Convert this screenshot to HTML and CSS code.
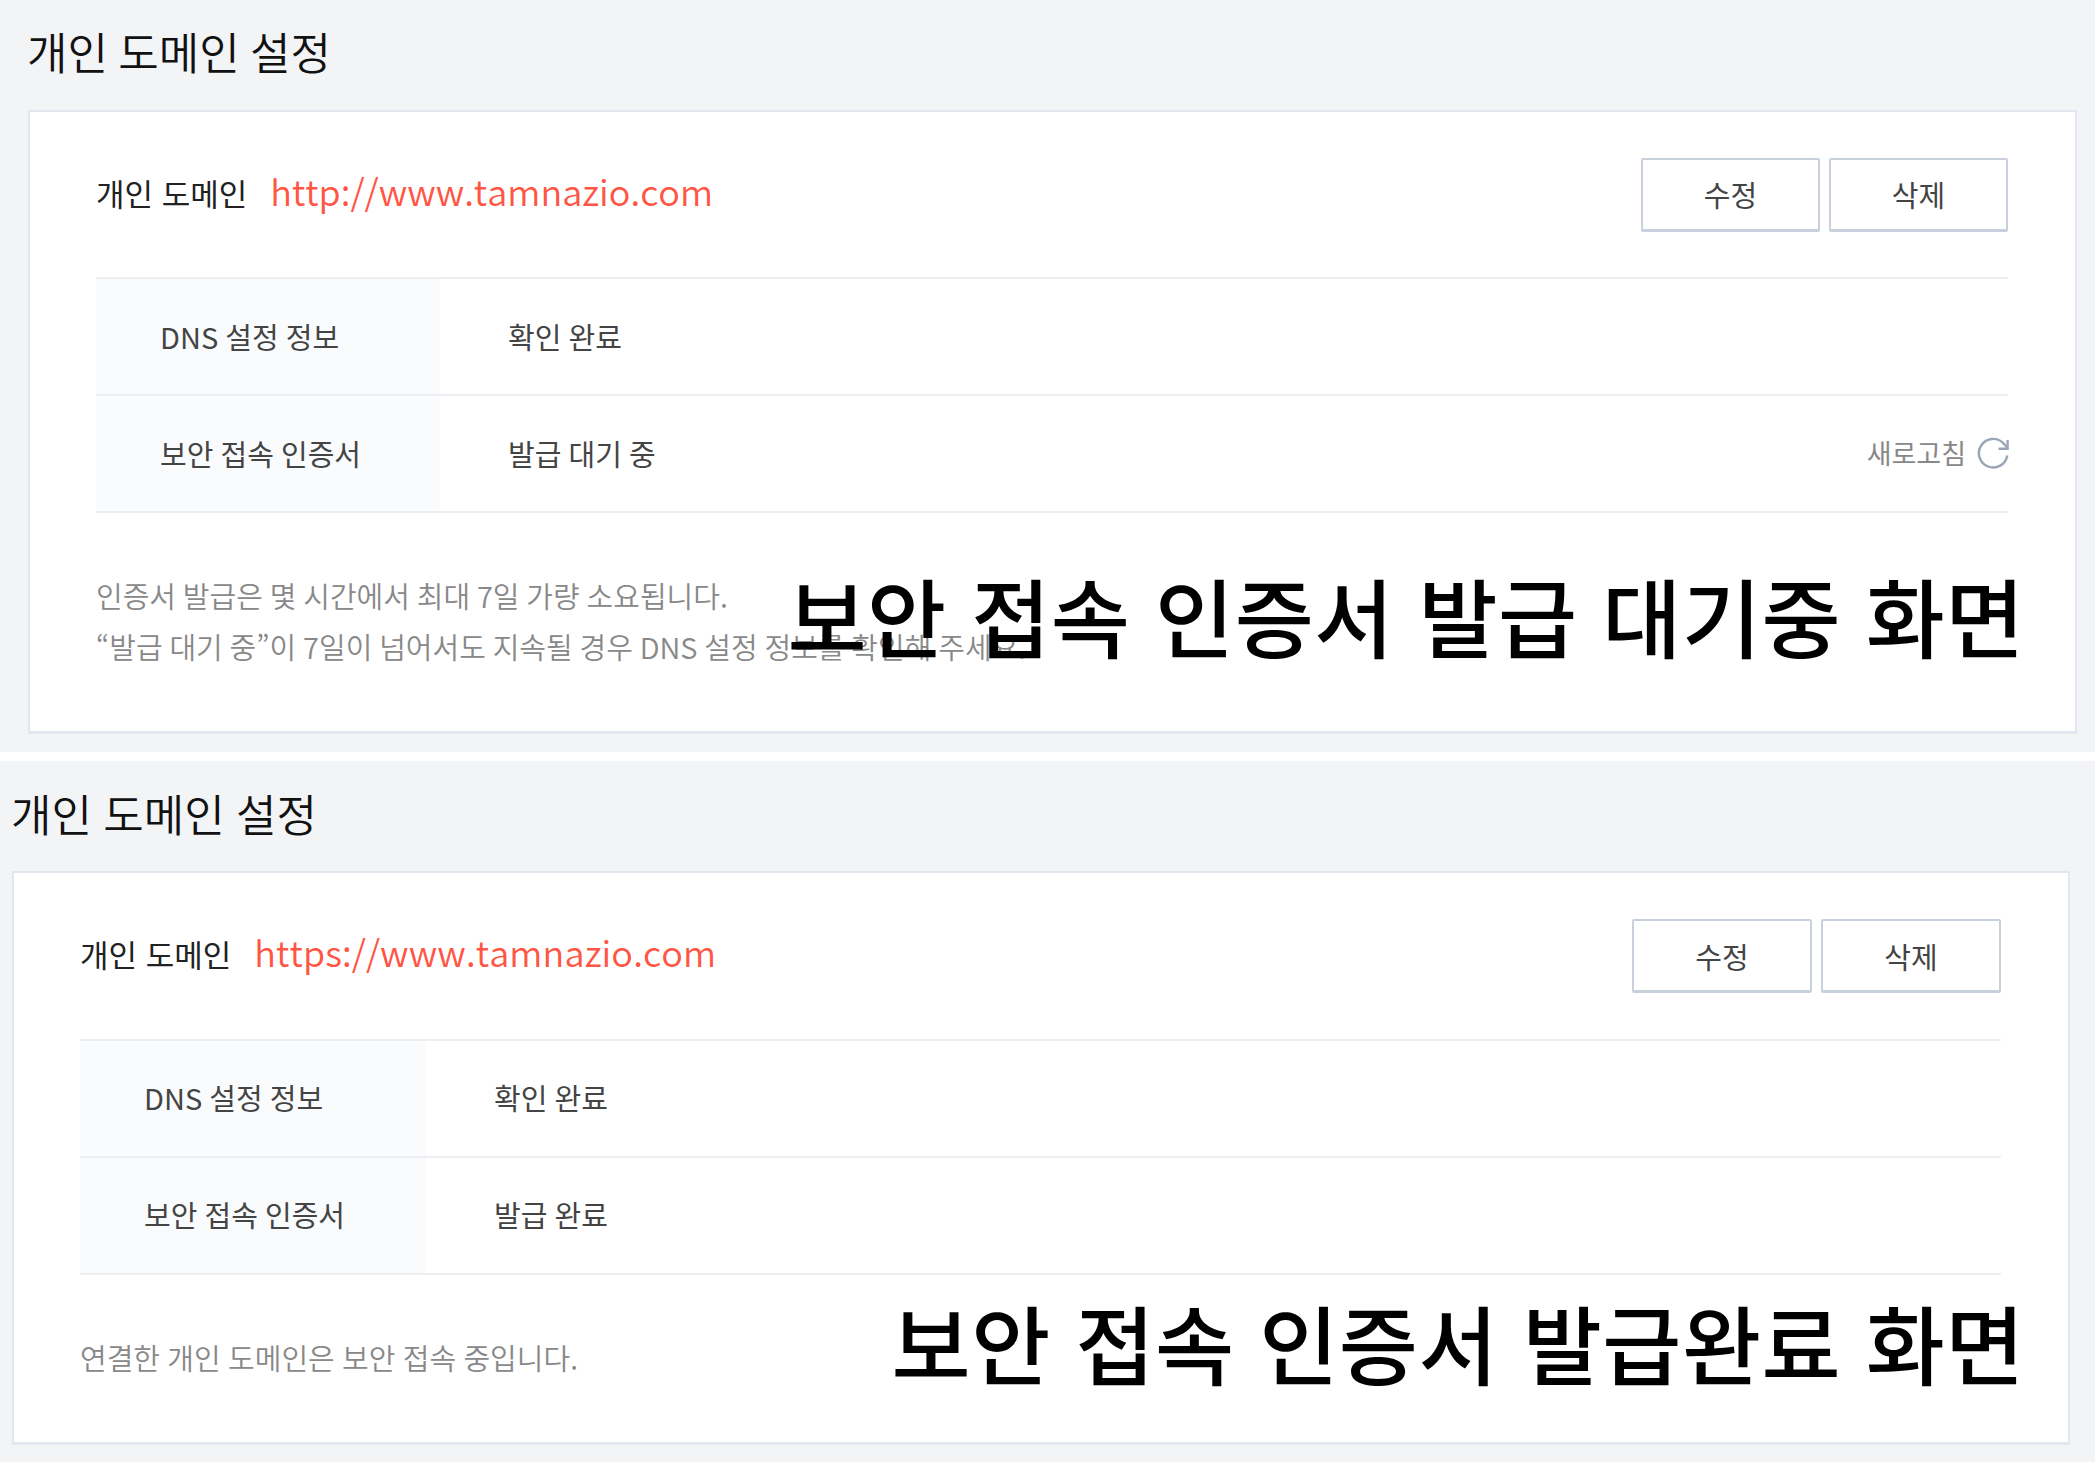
FILE: index.html
```
<!DOCTYPE html>
<html lang="ko">
<head>
	<meta charset="UTF-8">
	<title>개인 도메인 설정</title>
	<link rel="stylesheet" href="styles.css">
</head>
<body>
	<!-- 발급 대기 중 -->
	<div class="panel panel_wait">
		<h2 class="tit_domain">개인 도메인 설정</h2>
		<div class="box_domain">
			<div class="head_domain">
				<strong class="tit_sub">개인 도메인</strong>
				<a class="link_domain" lang="en">http://www.tamnazio.com</a>
				<div class="btn_area">
					<button type="button" class="btn">수정</button>
					<button type="button" class="btn">삭제</button>
				</div>
			</div>
			<dl class="list_info">
				<div class="row">
					<dt>DNS 설정 정보</dt>
					<dd>확인 완료</dd>
				</div>
				<div class="row">
					<dt>보안 접속 인증서</dt>
					<dd>발급 대기 중</dd>
					<dd class="refresh">
						<span>새로고침</span>
						<svg class="ico_refresh" viewBox="0 0 32 32">
							<path d="M30.3 18.5A14.3 14.3 0 1 1 26.5 6.3L30 10.5"/>
							<path d="M30.6 3V11.8H21.5"/>
						</svg>
					</dd>
				</div>
			</dl>
			<div class="desc">
				<p>인증서 발급은 몇 시간에서 최대 7일 가량 소요됩니다.</p>
				<p>“발급 대기 중”이 7일이 넘어서도 지속될 경우 DNS 설정 정보를 확인해 주세요.</p>
			</div>
		</div>
		<p class="caption">보안 접속 인증서 발급 대기중 화면</p>
	</div>

	<!-- 발급 완료 -->
	<div class="panel panel_done">
		<h2 class="tit_domain">개인 도메인 설정</h2>
		<div class="box_domain">
			<div class="head_domain">
				<strong class="tit_sub">개인 도메인</strong>
				<a class="link_domain" lang="en">https://www.tamnazio.com</a>
				<div class="btn_area">
					<button type="button" class="btn">수정</button>
					<button type="button" class="btn">삭제</button>
				</div>
			</div>
			<dl class="list_info">
				<div class="row">
					<dt>DNS 설정 정보</dt>
					<dd>확인 완료</dd>
				</div>
				<div class="row">
					<dt>보안 접속 인증서</dt>
					<dd>발급 완료</dd>
				</div>
			</dl>
			<div class="desc">
				<p>연결한 개인 도메인은 보안 접속 중입니다.</p>
			</div>
		</div>
		<p class="caption">보안 접속 인증서 발급완료 화면</p>
	</div>
</body>
</html>
```
FILE: styles.css
```
*{
	box-sizing:border-box;
	margin:0;
	padding:0;
}

body{
	width:2099px;
	height:1462px;
	overflow:hidden;
	background-color:#fff;
	font-family:"Noto Sans CJK KR",sans-serif;
	font-weight:400;
	color:#333;
}

.panel{
	position:relative;
	width:2095px;
	background-color:#f3f4f6;
}

.panel_wait{
	height:752px;
	padding:0 18px 0 28px;
	margin-bottom:9px;
}

.panel_done{
	height:701px;
	padding:0 25px 0 12px;
}

.tit_domain{
	height:110px;
	margin-left:-1px;
	line-height:103px;
	font-size:44px;
	font-weight:350;
	word-spacing:-2px;
	color:#111;
}

.panel_done .tit_domain{
	line-height:104px;
	word-spacing:-1px;
}

.box_domain{
	height:624px;
	padding:0 67px 0 66px;
	border:2px solid #e1e6ef;
	border-bottom-width:3px;
	background-color:#fff;
}

.panel_done .box_domain{
	height:574px;
}

.head_domain{
	display:flex;
	align-items:center;
	height:165px;
}

.panel_done .head_domain{
	height:166px;
}

.tit_sub{
	padding-bottom:5px;
	font-size:31px;
	font-weight:400;
	color:#222;
}

.link_domain{
	margin-left:23px;
	padding-bottom:9px;
	font-family:"Noto Sans CJK JP",sans-serif;
	font-size:36px;
	font-weight:350;
	font-kerning:none;
	color:#ff5544;
}

.panel_done .link_domain{
	padding-bottom:10px;
	letter-spacing:0.1px;
}

.btn_area{
	display:flex;
	gap:9px;
	margin-left:auto;
}

.btn{
	width:179px;
	height:74px;
	border:2px solid #c8d0dc;
	border-bottom-width:3px;
	border-radius:2px;
	background-color:#fff;
	font-family:inherit;
	font-size:29px;
	color:#444;
}

.panel_done .btn{
	width:180px;
}

.list_info{
	border-top:2px solid #eceef1;
	font-size:29px;
	word-spacing:-1px;
	color:#444;
}

.row{
	display:flex;
	height:117px;
	line-height:114px;
	border-bottom:2px solid #eceef1;
}

.panel_done .row{
	line-height:112px;
}

.row dt{
	width:344px;
	padding-left:64px;
	background-color:#fafbfd;
}

.panel_done .row dt{
	width:346px;
}

.row dd{
	padding-left:68px;
}

.row .refresh{
	display:flex;
	align-items:center;
	gap:11px;
	margin-left:auto;
	margin-right:-1px;
	padding-bottom:2px;
	line-height:112px;
	font-size:27px;
	color:#888;
}

.ico_refresh{
	width:32px;
	height:32px;
	fill:none;
	stroke:#9aa5b8;
	stroke-width:2.4;
}

.desc{
	padding-top:57px;
	line-height:51px;
	font-size:29px;
	font-weight:350;
	word-spacing:-1.3px;
	color:#888;
}

.panel_done .desc{
	word-spacing:-0.8px;
}

/* 화면 설명 */
.caption{
	position:absolute;
	right:70px;
	top:555px;
	line-height:120px;
	font-size:86px;
	font-weight:500;
	letter-spacing:0.5px;
	white-space:nowrap;
	color:#000;
}

.panel_done .caption{
	top:521px;
}
```
